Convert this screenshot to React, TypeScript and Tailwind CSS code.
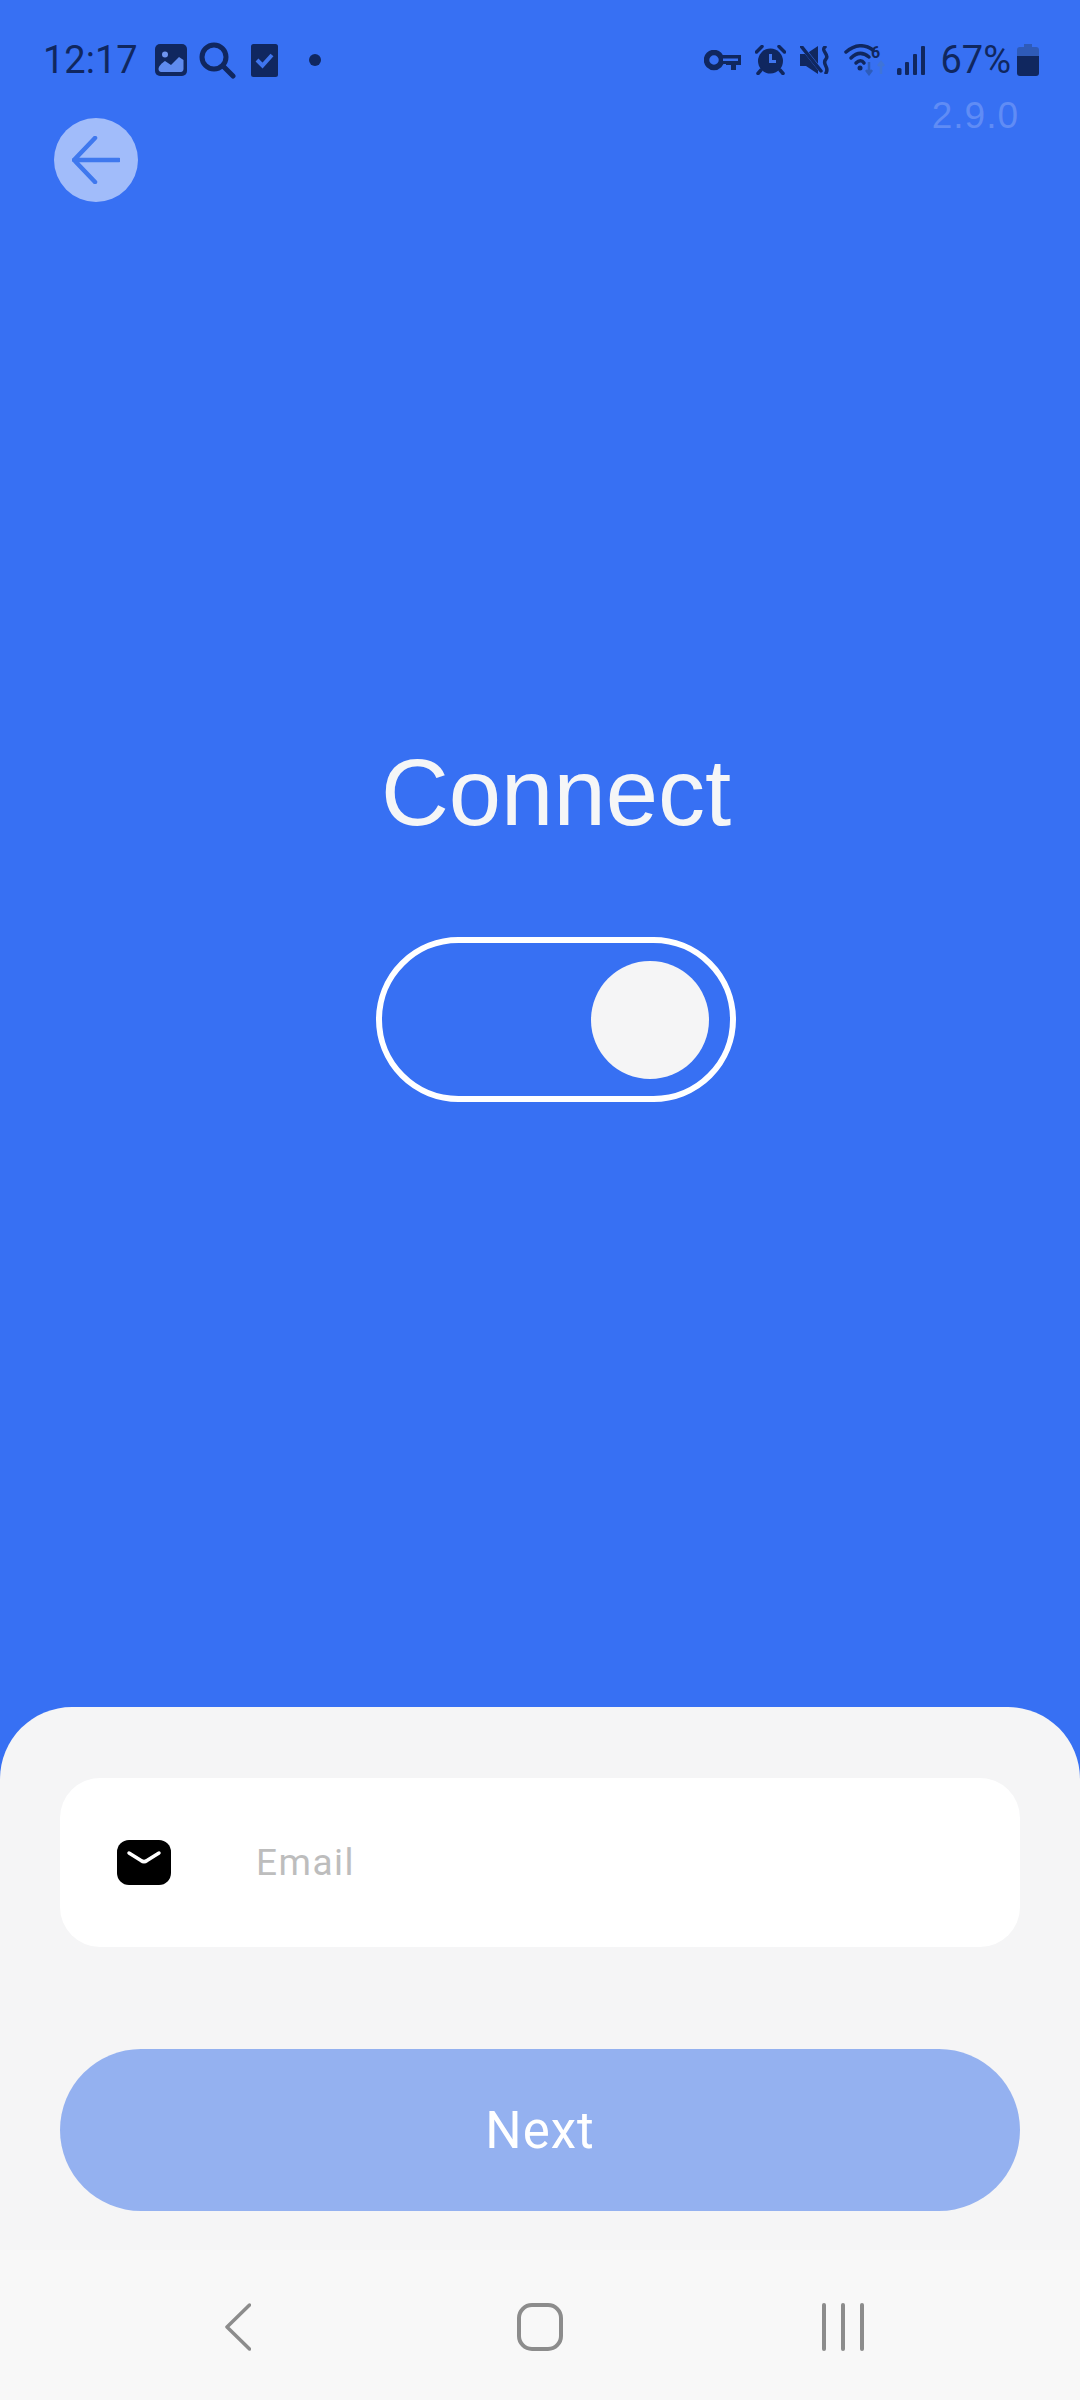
const navy = "#10275f";

function ImageIcon() {
  return (
    <svg className="ml-[17px] h-[32px] w-[32px]" viewBox="0 0 32 32">
      <rect width="32" height="32" rx="5" fill={navy} />
      <circle cx="10" cy="10.500" r="3" fill="#6f95ef" />
      <path d="M3.500 25 C3.500 22 7 19 10 17 L16 21 L24 13 L28.500 16 V25 C28.500 27 27 28 26 28 H6 C5 28 3.500 27 3.500 25 Z" fill="#5f8bef" />
    </svg>
  );
}

function SearchIcon() {
  return (
    <svg className="ml-[12px] h-[37px] w-[37px]" viewBox="0 0 37 37" fill="none" stroke={navy} strokeWidth="5" strokeLinecap="round">
      <circle cx="15" cy="15" r="12" />
      <path d="M24 24 L34 34" />
    </svg>
  );
}

function TaskIcon() {
  return (
    <svg className="ml-[15px] h-[33px] w-[27px]" viewBox="0 0 27 33" fill="none">
      <rect width="27" height="33" rx="2.500" fill={navy} />
      <path d="M6 16 L11.500 21.500 L21 11" stroke="#3f75ee" strokeWidth="4" />
    </svg>
  );
}

function KeyIcon() {
  return (
    <svg className="h-[21px] w-[37px]" viewBox="0 0 37 21" fill="none">
      <circle cx="10" cy="10" r="7.500" stroke={navy} strokeWidth="5.500" />
      <path d="M16 5 H37 V15 H32 V20 H27 V15 H22 V14 H16 Z" fill={navy} />
      <rect x="19" y="8.500" width="15" height="2.500" fill="#3770f3" />
    </svg>
  );
}

function AlarmIcon() {
  return (
    <svg className="ml-[14px] h-[30px] w-[31px]" viewBox="0 0 31 30" fill="none">
      <circle cx="15.500" cy="16" r="12.500" fill={navy} />
      <path d="M15.500 9 V16.500 H21" stroke="#3f75ee" strokeWidth="3" />
      <path d="M1.500 7 L7 1.500 M29.500 7 L24 1.500 M6 25 L3 28.500 M25 25 L28 28.500" stroke={navy} strokeWidth="3.500" strokeLinecap="round" />
    </svg>
  );
}

function MuteIcon() {
  return (
    <svg className="ml-[14px] h-[28px] w-[30px]" viewBox="0 0 30 28" fill="none">
      <path d="M0 8 H6 L18 0 V28 L6 20 H0 Z" fill={navy} />
      <path d="M2 1 L22 26" stroke="#3770f3" strokeWidth="4" />
      <path d="M1 0 L21 25" stroke={navy} strokeWidth="3.500" strokeLinecap="round" />
      <path d="M25 1 C20 5 30 8 26 13 C21 18 30 21 26 27" stroke={navy} strokeWidth="3.500" strokeLinecap="round" />
    </svg>
  );
}

function WifiIcon() {
  return (
    <svg className="ml-[14px] h-[32px] w-[44px]" viewBox="0 0 44 32" fill="none">
      <path d="M2 8 C11 0 21 0 29 6" stroke={navy} strokeWidth="3.500" strokeLinecap="round" />
      <path d="M7 14 C13 8 19 8 25 13" stroke={navy} strokeWidth="3.500" strokeLinecap="round" />
      <path d="M12 19 C15 16 18 16 20 19" stroke={navy} strokeWidth="3.500" strokeLinecap="round" />
      <circle cx="16" cy="24" r="2.500" fill={navy} />
      <text x="27" y="14" fontFamily="Roboto, sans-serif" fontSize="16" fontWeight="700" fill={navy}>
        6
      </text>
      <path d="M25 18 V29 M22 26 L25 30 L28 26" stroke="#2d5cbb" strokeWidth="2.500" />
      <path d="M37 30 V19 M34 22 L37 18 L40 22" stroke="#3f74d8" strokeWidth="2.500" />
    </svg>
  );
}

function SignalIcon() {
  return (
    <svg className="ml-[9px] h-[29px] w-[28px]" viewBox="0 0 28 29" fill={navy}>
      <rect x="0" y="22" width="4.500" height="7" rx="1.500" />
      <rect x="8" y="16" width="4" height="13" rx="1" />
      <rect x="16" y="8" width="4" height="21" rx="1" />
      <rect x="24" y="0" width="4" height="29" rx="1" />
    </svg>
  );
}

function BatteryIcon() {
  return (
    <svg className="ml-[6px] h-[32px] w-[22px]" viewBox="0 0 22 32">
      <path d="M7 0 H15 V3 H19 C21 3 22 4 22 6 V12 H0 V6 C0 4 1 3 3 3 H7 Z" fill="#2f5bb8" />
      <path d="M0 12 H22 V29 C22 31 21 32 19 32 H3 C1 32 0 31 0 29 Z" fill={navy} />
    </svg>
  );
}

function StatusBar() {
  return (
    <div className="flex h-[40px] items-center justify-between pl-[43px] pr-[41px] font-['Roboto',sans-serif] text-[38px] leading-none text-[#10275f]">
      <div className="flex items-center">
        <span>12:17</span>
        <ImageIcon />
        <SearchIcon />
        <TaskIcon />
        <span className="ml-[31px] h-[12px] w-[12px] rounded-full bg-[#10275f]" />
      </div>
      <div className="flex items-center">
        <KeyIcon />
        <AlarmIcon />
        <MuteIcon />
        <WifiIcon />
        <SignalIcon />
        <span className="ml-[15px]">67%</span>
        <BatteryIcon />
      </div>
    </div>
  );
}

export default function App() {
  return (
    <div className="flex h-[2400px] w-[1080px] flex-col overflow-hidden bg-[#3770f3] font-['Liberation_Sans',sans-serif]">
      <div className="relative flex-1 pt-[40px]">
        <StatusBar />
        <span className="absolute right-[61px] top-[97px] text-[37px] leading-none tracking-[1px] text-[#608cf5]">
          2.9.0
        </span>

        {/* Back button */}
        <button className="ml-[54px] mt-[38px] flex h-[84px] w-[84px] items-center justify-center rounded-full bg-[#a1bcfa]">
          <svg className="h-[48px] w-[48px]" viewBox="0 0 48 48" fill="none" stroke="#3f78ee" strokeWidth="4.500" strokeLinecap="round" strokeLinejoin="round">
            <path d="M23 2 L2 24 L23 46 M2 24 H47" />
          </svg>
        </button>

        {/* Connect toggle */}
        <div className="mt-[544px] flex flex-col items-center pl-[32px]">
          <h1 className="text-[94px] font-normal leading-none text-[#f5f6f7]">Connect</h1>
          <div className="mt-[97px] flex h-[165px] w-[360px] items-center justify-end rounded-full border-[6px] border-white pr-[21px]">
            <div className="h-[118px] w-[118px] rounded-full bg-[#f5f5f6]" />
          </div>
        </div>
      </div>

      {/* Bottom sheet */}
      <div className="h-[693px] rounded-t-[72px] bg-[#f5f5f6]">
        <div className="px-[60px] pt-[71px]">
          <div className="flex h-[169px] items-center rounded-[40px] bg-white pl-[57px]">
            <svg className="h-[45px] w-[54px]" viewBox="0 0 54 45" fill="none">
              <rect width="54" height="45" rx="12" fill="#000" />
              <path d="M12 13 L24 20.500 C26 22 28 22 30 20.500 L42 13" stroke="#fff" strokeWidth="3.500" strokeLinecap="round" />
            </svg>
            <span className="ml-[85px] font-['Roboto',sans-serif] text-[37px] leading-none tracking-[1.500px] text-[#bdbdbd]">
              Email
            </span>
          </div>
          <button className="mt-[102px] flex h-[162px] w-full items-center justify-center rounded-full bg-[#94b1f0] font-['Roboto',sans-serif] text-[51px] leading-none tracking-[1px] text-white">
            Next
          </button>
        </div>

        {/* Android nav bar */}
        <div className="mt-[39px] flex h-[150px] items-start bg-[#f8f8f8] pl-[225px] pt-[53px]">
          <svg className="h-[48px] w-[26px]" viewBox="0 0 26 48" fill="none" stroke="#8c8c8c" strokeWidth="3.500" strokeLinecap="round" strokeLinejoin="round">
            <path d="M24.500 2 L2 24 L24.500 46" />
          </svg>
          <svg className="ml-[266px] h-[48px] w-[46px]" viewBox="0 0 46 48" fill="none" stroke="#8c8c8c" strokeWidth="4">
            <rect x="2" y="2" width="42" height="44" rx="13" />
          </svg>
          <div className="ml-[259px] flex h-[48px] gap-[15px]">
            <div className="h-full w-[4px] rounded-full bg-[#8c8c8c]" />
            <div className="h-full w-[4px] rounded-full bg-[#8c8c8c]" />
            <div className="h-full w-[4px] rounded-full bg-[#8c8c8c]" />
          </div>
        </div>
      </div>
    </div>
  );
}
